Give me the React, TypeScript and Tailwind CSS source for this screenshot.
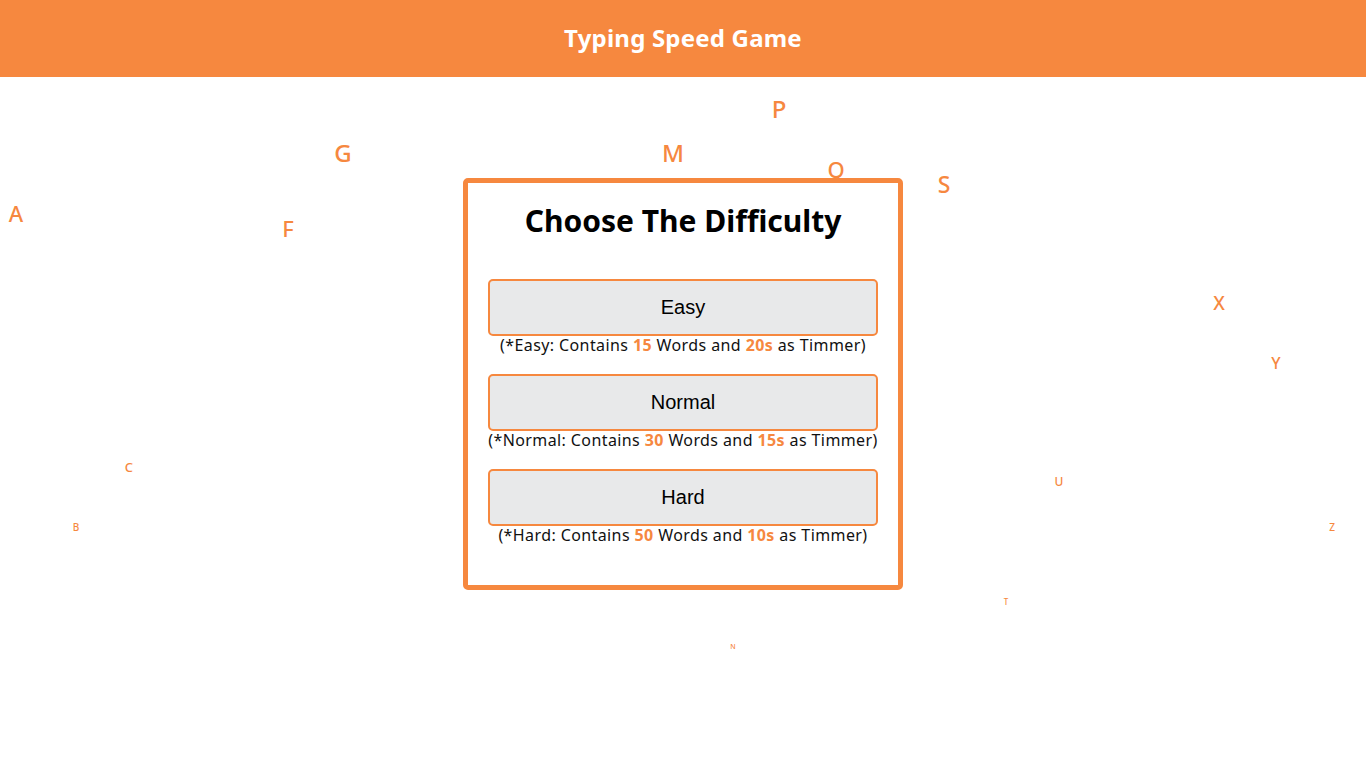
import React from "react";

const letters: { ch: string; x: number; y: number; s: number }[] = [
  { ch: "A", x: 16, y: 213, s: 22 },
  { ch: "G", x: 343, y: 153, s: 24 },
  { ch: "F", x: 288, y: 228, s: 22 },
  { ch: "M", x: 673, y: 153, s: 24 },
  { ch: "P", x: 779, y: 109, s: 24 },
  { ch: "Q", x: 836, y: 169, s: 22 },
  { ch: "S", x: 944, y: 184, s: 23 },
  { ch: "X", x: 1219, y: 303, s: 19 },
  { ch: "Y", x: 1276, y: 363, s: 16 },
  { ch: "C", x: 129, y: 467, s: 13 },
  { ch: "B", x: 76, y: 527, s: 10 },
  { ch: "U", x: 1059, y: 482, s: 12 },
  { ch: "Z", x: 1332, y: 527, s: 10 },
  { ch: "T", x: 1006, y: 602, s: 8 },
  { ch: "N", x: 733, y: 646, s: 7 },
];

const levels = [
  { name: "Easy", words: "15", time: "20s" },
  { name: "Normal", words: "30", time: "15s" },
  { name: "Hard", words: "50", time: "10s" },
];

export default function App() {
  return (
    <div
      className="relative min-h-[768px] w-full bg-white overflow-hidden"
      style={{ fontFamily: '"Noto Sans", "Open Sans", sans-serif' }}
    >
      <header className="h-[77px] bg-[#f6883f] flex items-center justify-center pb-[2px]">
        <h1 className="text-white text-[24px] font-bold tracking-[0.2px]">Typing Speed Game</h1>
      </header>

      {letters.map((l) => (
        <span
          key={l.ch}
          className="absolute text-[#f6883f] font-medium leading-none -translate-x-1/2 -translate-y-1/2"
          style={{ left: l.x, top: l.y, fontSize: l.s }}
        >
          {l.ch}
        </span>
      ))}

      <div className="relative mx-auto mt-[101px] w-[440px] h-[412px] border-[5px] border-[#f6883f] rounded-[5px] bg-white px-[20px]">
        <h2 className="text-center text-black font-bold text-[30px] mt-[18px] leading-[40px]">
          Choose The Difficulty
        </h2>
        <div className="mt-[38px] flex flex-col gap-[20px]">
          {levels.map((lv) => (
            <div key={lv.name}>
              <button
                className="w-full h-[57px] pb-[2px] bg-[#e8e9ea] border-2 border-[#f6883f] rounded-[5px] text-[20px] text-black"
                style={{ fontFamily: '"Liberation Sans", Arial, sans-serif' }}
              >
                {lv.name}
              </button>
              <p className="text-center text-[16px] tracking-[0.4px] leading-[18px] text-[#111] whitespace-nowrap">
                (*{lv.name}: Contains <span className="text-[#f6883f] font-bold">{lv.words}</span> Words and{" "}
                <span className="text-[#f6883f] font-bold">{lv.time}</span> as Timmer)
              </p>
            </div>
          ))}
        </div>
      </div>
    </div>
  );
}
